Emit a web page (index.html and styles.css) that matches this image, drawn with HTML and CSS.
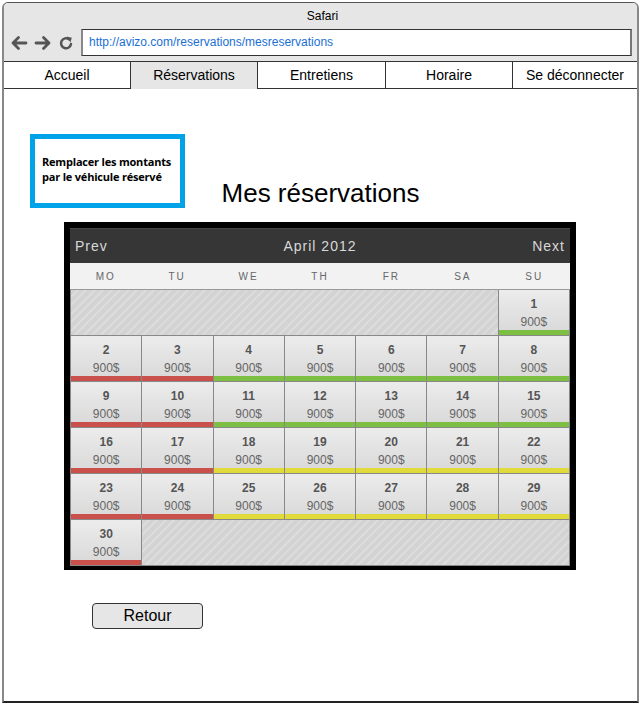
FILE: index.html
```html
<!DOCTYPE html>
<html lang="fr">
<head>
<meta charset="utf-8">
<title>Mes réservations</title>
<link rel="stylesheet" href="styles.css">
</head>
<body>
<div class="window">
  <div class="titlebar">
    <div class="title">Safari</div>
    <div class="addr-row">
      <div class="navicons">
        <svg width="18" height="16" viewBox="0 0 18 16"><path d="M16 8H3M8.5 2.5L3 8l5.5 5.5" fill="none" stroke="#555" stroke-width="2.8" stroke-linecap="round" stroke-linejoin="round"/></svg>
        <svg width="18" height="16" viewBox="0 0 18 16"><path d="M2 8h13M9.5 2.5L15 8l-5.5 5.5" fill="none" stroke="#555" stroke-width="2.8" stroke-linecap="round" stroke-linejoin="round"/></svg>
        <svg width="16" height="16" viewBox="0 0 16 16"><path d="M13 9A5 5 0 1 1 11 4.2" fill="none" stroke="#555" stroke-width="2.5" stroke-linecap="round"/><path d="M8.6 1.6l5.2 1.1-1.4 4.9z" fill="#555"/></svg>
      </div>
      <div class="url">http://avizo.com/reservations/mesreservations</div>
    </div>
  </div>
  <nav class="tabs">
    <div class="tab">Accueil</div>
    <div class="tab active">Réservations</div>
    <div class="tab">Entretiens</div>
    <div class="tab">Horaire</div>
    <div class="tab">Se déconnecter</div>
  </nav>
  <main class="content">
    <div class="note">Remplacer les montants<br>par le véhicule réservé</div>
    <h1 class="heading">Mes réservations</h1>
    <div class="calendar">
      <div class="cal-head">
        <span>Prev</span>
        <span>April 2012</span>
        <span>Next</span>
      </div>
      <div class="days">
        <span>MO</span><span>TU</span><span>WE</span><span>TH</span><span>FR</span><span>SA</span><span>SU</span>
      </div>
      <div class="grid">
        <div class="empty span6"></div>
        <div class="cell green"><b>1</b><span>900$</span></div>
        <div class="cell red"><b>2</b><span>900$</span></div>
        <div class="cell red"><b>3</b><span>900$</span></div>
        <div class="cell green"><b>4</b><span>900$</span></div>
        <div class="cell green"><b>5</b><span>900$</span></div>
        <div class="cell green"><b>6</b><span>900$</span></div>
        <div class="cell green"><b>7</b><span>900$</span></div>
        <div class="cell green"><b>8</b><span>900$</span></div>
        <div class="cell red"><b>9</b><span>900$</span></div>
        <div class="cell red"><b>10</b><span>900$</span></div>
        <div class="cell green"><b>11</b><span>900$</span></div>
        <div class="cell green"><b>12</b><span>900$</span></div>
        <div class="cell green"><b>13</b><span>900$</span></div>
        <div class="cell green"><b>14</b><span>900$</span></div>
        <div class="cell green"><b>15</b><span>900$</span></div>
        <div class="cell red"><b>16</b><span>900$</span></div>
        <div class="cell red"><b>17</b><span>900$</span></div>
        <div class="cell yellow"><b>18</b><span>900$</span></div>
        <div class="cell yellow"><b>19</b><span>900$</span></div>
        <div class="cell yellow"><b>20</b><span>900$</span></div>
        <div class="cell yellow"><b>21</b><span>900$</span></div>
        <div class="cell yellow"><b>22</b><span>900$</span></div>
        <div class="cell red"><b>23</b><span>900$</span></div>
        <div class="cell red"><b>24</b><span>900$</span></div>
        <div class="cell yellow"><b>25</b><span>900$</span></div>
        <div class="cell yellow"><b>26</b><span>900$</span></div>
        <div class="cell yellow"><b>27</b><span>900$</span></div>
        <div class="cell yellow"><b>28</b><span>900$</span></div>
        <div class="cell yellow"><b>29</b><span>900$</span></div>
        <div class="cell red"><b>30</b><span>900$</span></div>
        <div class="empty span6"></div>
      </div>
    </div>
    <button class="back">Retour</button>
  </main>
</div>
</body>
</html>
```

FILE: styles.css
```css
* { box-sizing: border-box; }
html, body { margin: 0; padding: 0; background: #fff; }
body { font-family: "Liberation Sans", Arial, sans-serif; color: #000; }

.window {
  margin: 2px 0 0 2px;
  width: 637px;
  height: 701px;
  border: 1px solid #555;
  border-left: 2px solid #888;
  border-right: 2px solid #888;
  border-bottom: 2px solid #222;
  border-radius: 6px 6px 0 0;
  display: flex;
  flex-direction: column;
  overflow: hidden;
}

.titlebar {
  background: #e6e6e6;
  height: 59px;
  border-bottom: 1px solid #333;
  display: flex;
  flex-direction: column;
}
.title {
  text-align: center;
  font-size: 12px;
  line-height: 12px;
  padding-top: 7px;
  padding-left: 4px;
}
.addr-row {
  display: flex;
  align-items: center;
  margin-top: 7px;
  padding-left: 6px;
  padding-right: 5px;
}
.navicons {
  display: flex;
  align-items: center;
  gap: 6px;
  width: 71px;
}
.url {
  flex: 1;
  height: 27px;
  background: #fff;
  border: 1px solid #333;
  border-left: 2px solid #888;
  border-right: 2px solid #777;
  color: #1a6fd6;
  font-size: 12px;
  line-height: 25px;
  padding-left: 6px;
}

.tabs {
  display: grid;
  grid-template-columns: 126px 127px 128px 127px 1fr;
  height: 27px;
  border-bottom: 1px solid #333;
}
.tab {
  text-align: center;
  font-size: 14px;
  line-height: 27px;
  border-left: 1px solid #333;
}
.tab:first-child { border-left: none; }
.tab.active { background: #e6e6e6; }

.content {
  flex: 1;
  position: relative;
  padding-top: 45px;
}

.note {
  margin-left: 26px;
  width: 155px;
  height: 74px;
  border: 5px solid #00a2e8;
  font-family: "Open Sans", "Liberation Sans", sans-serif;
  font-weight: bold;
  font-size: 11px;
  line-height: 15px;
  padding: 15px 0 0 7px;
  letter-spacing: -0.2px;
}

.heading {
  margin: -31px 0 0 0;
  text-align: center;
  font-weight: normal;
  font-size: 26px;
  line-height: 32px;
  height: 32px;
}

.calendar {
  margin: 13px 0 0 60px;
  width: 512px;
  border: 6px solid #000;
  border-bottom-width: 4px;
  background: #000;
}
.cal-head {
  height: 35px;
  background: #363636;
  color: #d8d8d8;
  display: flex;
  justify-content: space-between;
  align-items: center;
  padding: 0 5px;
  font-size: 14px;
  letter-spacing: 1px;
  border-top: 1px solid #444;
}
.days {
  display: grid;
  grid-template-columns: repeat(7, 1fr);
  height: 27px;
  background: #f2f2f2;
  color: #666;
  font-size: 10px;
  letter-spacing: 2px;
  align-items: center;
  text-align: center;
  border-bottom: 1px solid #999;
}
.grid {
  display: grid;
  grid-template-columns: repeat(7, 1fr);
  grid-auto-rows: 45px;
  background: #888;
  gap: 1px;
  border-left: 1px solid #888;
  border-right: 1px solid #888;
  border-bottom: 1px solid #888;
}
.empty {
  background: repeating-linear-gradient(-45deg, #d3d3d3 0 4px, #dcdcdc 4px 6px);
}
.span6 { grid-column: span 6; }
.cell {
  background: linear-gradient(#ececec, #d8d8d8);
  display: flex;
  flex-direction: column;
  align-items: center;
  padding-top: 6px;
  position: relative;
}
.cell b {
  font-size: 12px;
  line-height: 16px;
  color: #555;
}
.cell span {
  font-size: 12px;
  line-height: 16px;
  margin-top: 2px;
  color: #666;
}
.cell::after {
  content: "";
  position: absolute;
  left: 0;
  right: 0;
  bottom: 0;
  height: 5px;
}
.cell.red::after { background: #c9504b; }
.cell.green::after { background: #7dbf42; }
.cell.yellow::after { background: #e0db3a; }

.back {
  display: block;
  margin: 33px 0 0 88px;
  width: 111px;
  height: 26px;
  background: #e6e6e6;
  border: 1px solid #333;
  border-radius: 4px;
  font-family: "Liberation Sans", Arial, sans-serif;
  font-size: 16px;
  color: #000;
  padding: 0;
}
```
